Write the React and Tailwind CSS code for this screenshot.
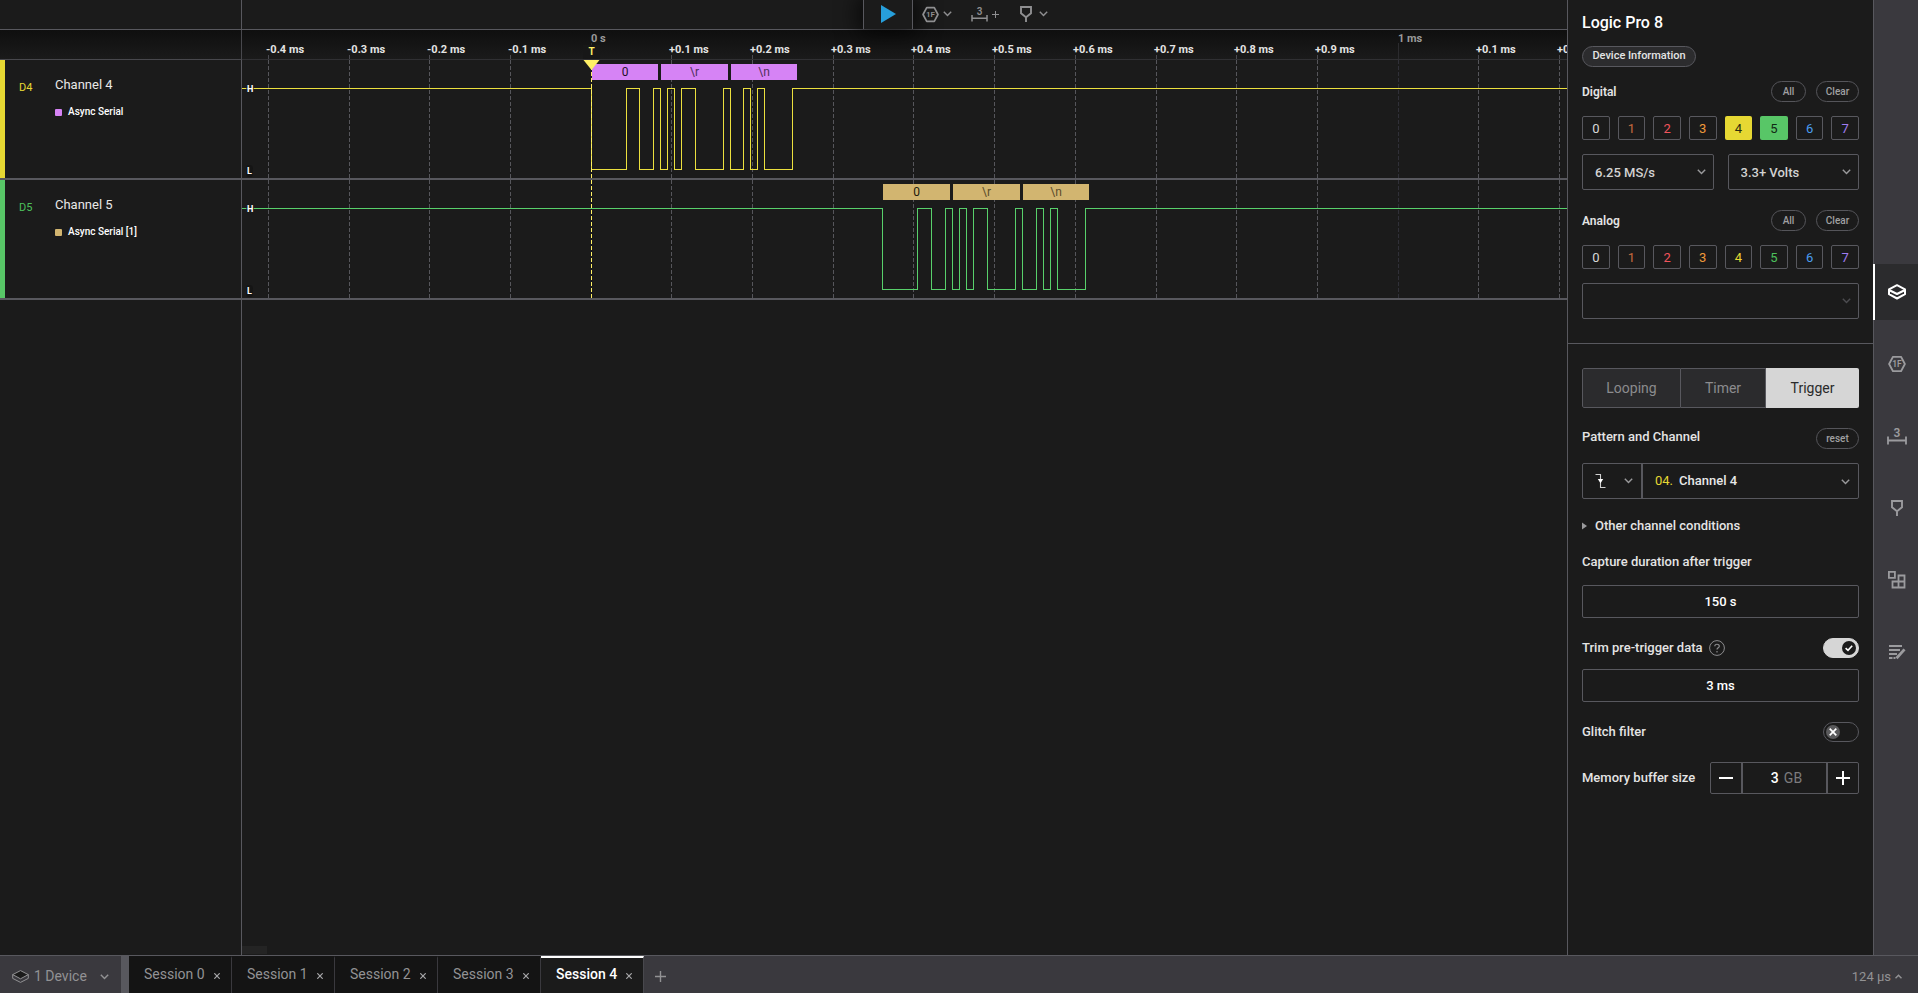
import React, { useState } from "react";

const TICKS = [
  { x: 26, label: "-0.4 ms" },
  { x: 107, label: "-0.3 ms" },
  { x: 187, label: "-0.2 ms" },
  { x: 268, label: "-0.1 ms" },
  { x: 349, label: "0 s", major: true },
  { x: 429, label: "+0.1 ms" },
  { x: 510, label: "+0.2 ms" },
  { x: 591, label: "+0.3 ms" },
  { x: 671, label: "+0.4 ms" },
  { x: 752, label: "+0.5 ms" },
  { x: 833, label: "+0.6 ms" },
  { x: 914, label: "+0.7 ms" },
  { x: 994, label: "+0.8 ms" },
  { x: 1075, label: "+0.9 ms" },
  { x: 1156, label: "1 ms", major: true },
  { x: 1236, label: "+0.1 ms" },
  { x: 1317, label: "+0.2 ms" },
];

const LANES = [
  {
    id: "D4",
    name: "Channel 4",
    analyzer: "Async Serial",
    strip: "bg-[#e6d833]",
    idColor: "text-[#e6d833]",
    swatch: "bg-[#d683f5]",
    bubble: "bg-[#d683f5]",
    stroke: "#ece03e",
    edges: [349, 384, 397, 411, 418, 425, 432, 439, 453, 481, 488, 501, 508, 515, 522, 550],
    frames: [
      { x: 350, w: 66, text: "0", tone: "text-[#1f1028]" },
      { x: 419, w: 67, text: "\\r", tone: "text-[#4f2f5c]" },
      { x: 489, w: 66, text: "\\n", tone: "text-[#4f2f5c]" },
    ],
  },
  {
    id: "D5",
    name: "Channel 5",
    analyzer: "Async Serial [1]",
    strip: "bg-[#58c667]",
    idColor: "text-[#4cc05c]",
    swatch: "bg-[#d2b570]",
    bubble: "bg-[#d2b570]",
    stroke: "#58d06b",
    edges: [640, 675, 689, 703, 710, 717, 724, 731, 745, 773, 780, 794, 801, 808, 815, 843],
    frames: [
      { x: 641, w: 67, text: "0", tone: "text-[#201a0c]" },
      { x: 711, w: 67, text: "\\r", tone: "text-[#5c4e2c]" },
      { x: 781, w: 66, text: "\\n", tone: "text-[#5c4e2c]" },
    ],
  },
];

function wavePath(edges) {
  const high = 28.5;
  const low = 109.5;
  let d = `M0 ${high}`;
  edges.forEach((e, i) => {
    d += `H${e + 0.5}V${i % 2 === 0 ? low : high}`;
  });
  return d + "H6000";
}

function Chevron({ className = "" }) {
  return (
    <svg width="9" height="6" viewBox="0 0 9 6" fill="none" stroke="currentColor" strokeWidth="1.4" className={className} aria-hidden="true">
      <path d="M0.8 0.8 4.5 4.6 8.2 0.8" />
    </svg>
  );
}

function HexIcon({ size = 18 }) {
  return (
    <svg width={size} height={size} viewBox="0 0 18 18" fill="none" stroke="currentColor" strokeWidth="1.8" className="overflow-visible" aria-hidden="true">
      <path d="M5 1.8h8L16.9 9 13 16.2H5L1.1 9z" strokeLinejoin="round" />
      <text x="9" y="12" textAnchor="middle" fontFamily="Roboto, sans-serif" fontSize="8.5" fontWeight="600" fill="currentColor" stroke="none">1F</text>
    </svg>
  );
}

function MeasureIcon({ width = 20, height = 18 }) {
  return (
    <svg width={width} height={height} viewBox="0 0 20 18" fill="none" stroke="currentColor" strokeWidth="1.8" className="overflow-visible" aria-hidden="true">
      <text x="10" y="10" textAnchor="middle" fontFamily="Roboto, sans-serif" fontSize="12" fontWeight="600" fill="currentColor" stroke="none">3</text>
      <path d="M1 9.5v8M19 9.5v8M1 13.5h18" />
    </svg>
  );
}

function MarkerIcon() {
  return (
    <svg width="14" height="18" viewBox="0 0 14 18" fill="none" stroke="currentColor" strokeWidth="1.9" aria-hidden="true">
      <path d="M2 2h10v6.2L7 12.2 2 8.2zM7 12v5" />
    </svg>
  );
}

function DeviceIcon() {
  return (
    <svg width="20" height="18" viewBox="0 0 20 18" fill="none" stroke="currentColor" strokeWidth="2" strokeLinejoin="round" aria-hidden="true">
      <path d="M10 2.2 18 6.4v4.8l-8 4.3-8-4.3V6.4z" />
      <path d="M2 7l8 4 8-4" />
    </svg>
  );
}

function BlocksIcon() {
  return (
    <svg width="20" height="20" viewBox="0 0 20 20" fill="none" stroke="currentColor" strokeWidth="1.8" aria-hidden="true">
      <path d="M1.9 1.9h6v6h-6zM11.5 5.5h6v6h-6zM5.5 11.5h6v6h-6zM11.5 11.5h6v6h-6z" />
    </svg>
  );
}

function NotesIcon() {
  return (
    <svg width="18" height="16" viewBox="0 0 18 16" fill="none" stroke="currentColor" strokeWidth="1.9" aria-hidden="true">
      <path d="M1 2h13M1 6h11M1 10h8M1 14h3.5M5.5 14h2" />
      <path d="M8.5 14.2 16.5 5.4" strokeWidth="2.8" />
    </svg>
  );
}

function Toolbar() {
  return (
    <header className="flex h-[30px] shrink-0 border-b border-[#58585e]">
      <div className="w-[242px] shrink-0 border-r border-[#58585e]" />
      <div className="flex flex-1 justify-center overflow-visible pl-[109px]">
        <div className="relative z-10 flex w-[193px] items-stretch text-[#8f8f91]">
          <button type="button" aria-label="Start capture" className="grid w-[50px] shrink-0 place-items-center border-x border-[#58585e] bg-[#1b1b1b] pb-px pl-px shadow-[0_0_22px_4px_rgba(0,0,0,0.75)]">
            <svg width="15" height="18" viewBox="0 0 15 18" aria-hidden="true">
              <path d="M0 0 15 9 0 18z" fill="#279fdb" />
            </svg>
          </button>
          <div className="flex flex-1 items-center justify-between pr-2 pb-px pl-[9px]">
            <button type="button" aria-label="Add analyzer" className="flex items-center gap-1">
              <HexIcon size={17} />
              <Chevron />
            </button>
            <button type="button" aria-label="Add measurement" className="flex items-center gap-1">
              <MeasureIcon width={17} height={15} />
              <svg width="7" height="7" viewBox="0 0 7 7" stroke="currentColor" aria-hidden="true">
                <path d="M3.5 0v7M0 3.5h7" />
              </svg>
            </button>
            <button type="button" aria-label="Add marker" className="flex items-center gap-1.5">
              <MarkerIcon />
              <Chevron />
            </button>
          </div>
        </div>
      </div>
    </header>
  );
}

function Ruler() {
  return (
    <div className="flex h-[30px] shrink-0 bg-linear-to-b from-[#0f0f0f] to-[#1b1b1b]">
      <div className="w-[242px] shrink-0 border-r border-b border-[#48484d]" />
      <div className="relative flex-1 overflow-hidden border-b border-[#303033] font-bold">
        {TICKS.map((t) => (
          <React.Fragment key={t.x}>
            <span
              className={
                t.major
                  ? "absolute top-px text-[11px] leading-4 whitespace-nowrap text-[#9a9a9a]"
                  : "absolute top-3 text-[11px] leading-4 whitespace-nowrap text-[#e4e4e4]"
              }
              style={{ left: t.major ? t.x : t.x - 2 }}
            >
              {t.label}
            </span>
            <span
              className={t.major ? "absolute bottom-0 h-4 w-px bg-[#2b2b2e]" : "absolute bottom-0 h-1 w-px bg-[#4a4a50]"}
              style={{ left: t.x }}
            />
          </React.Fragment>
        ))}
        <span className="absolute bottom-0 left-[341px] w-[17px] bg-[#171717] text-center text-[10px] leading-[14px] text-[#fff066]">T</span>
      </div>
    </div>
  );
}

function Lane({ lane, first }) {
  return (
    <section className="flex h-[120px] shrink-0 border-b-2 border-[#58585e]">
      <div className="flex w-[242px] shrink-0 border-r border-[#58585e]">
        <div className={`w-[5px] ${lane.strip}`} />
        <div className={`w-9 pt-[19px] pl-3.5 text-[11px] leading-[18px] ${lane.idColor}`}>{lane.id}</div>
        <div className="pt-4 pl-3.5">
          <h2 className="text-[13px] leading-[18px] text-[#e8e8e8]">{lane.name}</h2>
          <p className="mt-2.5 flex items-center gap-1.5 text-[10px] leading-4 font-medium text-white">
            <span className={`size-[7px] rounded-[1px] ${lane.swatch}`} />
            {lane.analyzer}
          </p>
        </div>
      </div>
      <div className="relative flex-1 overflow-hidden">
        <svg className="absolute inset-0 h-full w-full" shapeRendering="crispEdges" fill="none" aria-hidden="true">
          {TICKS.filter((t) => t.x !== 349).map((t) => (
            <path key={t.x} d={`M${t.x + 0.5} 0V118`} stroke={t.major ? "#303038" : "#56565b"} strokeDasharray="4 2" />
          ))}
          <path d={wavePath(lane.edges)} stroke={lane.stroke} />
          <path d="M349.5 0V118" stroke="#fff066" strokeDasharray="4 2" />
        </svg>
        {lane.frames.map((f) => (
          <div
            key={f.x}
            className={`absolute top-1 h-4 text-center text-[12px] leading-4 ${lane.bubble} ${f.tone}`}
            style={{ left: f.x, width: f.w }}
          >
            {f.text}
          </div>
        ))}
        {first && (
          <svg className="absolute top-0 left-[341px]" width="17" height="10" viewBox="0 0 17 10" aria-hidden="true">
            <path d="M0.5 0h16l-8 10z" fill="#fff066" />
          </svg>
        )}
        <span className="absolute top-[23px] left-1 rounded bg-[#1b1b1b]/60 px-px text-[9px] leading-3 font-bold text-white">H</span>
        <span className="absolute top-[105px] left-1 rounded bg-[#151515] px-px text-[9px] leading-3 font-bold text-white">L</span>
      </div>
    </section>
  );
}

const PORTS = [
  "text-[#d8d8d8]",
  "text-[#c56b3e]",
  "text-[#f2545b]",
  "text-[#f09a3a]",
  "text-[#e6d833]",
  "text-[#4cc05c]",
  "text-[#4a9df0]",
  "text-[#a07df2]",
];

function Pill({ children, className = "" }) {
  return (
    <button type="button" className={`h-[21px] rounded-full border border-[#55555a] text-[10px] font-medium text-[#a0a0a2] ${className}`}>
      {children}
    </button>
  );
}

function PortGroup({ title, active }) {
  return (
    <>
      <div className="flex h-[21px] items-center gap-2.5">
        <h3 className="flex-1 text-[12px] font-semibold">{title}</h3>
        <Pill className="w-[35px]">All</Pill>
        <Pill className="w-[43px]">Clear</Pill>
      </div>
      <div className="mt-3.5 grid grid-cols-8 gap-2">
        {PORTS.map((color, i) => {
          const on = active.includes(i);
          const tone = !on
            ? `border border-[#58585e] ${color}`
            : i === 4
              ? "bg-[#e6d833] text-[#2a2a10]"
              : "bg-[#58c667] text-[#102a14]";
          return (
            <button key={i} type="button" aria-pressed={on} aria-label={`${title} ${i}`} className={`h-6 rounded-xs pt-px text-[13px] ${tone}`}>
              {i}
            </button>
          );
        })}
      </div>
    </>
  );
}

function SelectBox({ label, options, disabled }) {
  return (
    <div className="relative">
      <select
        aria-label={label}
        disabled={disabled}
        className="block h-9 w-full appearance-none rounded-xs border border-[#58585e] bg-transparent pt-px pl-3 text-[13px] font-medium text-[#d2d2d2]"
      >
        {options.map((o) => (
          <option key={o}>{o}</option>
        ))}
      </select>
      <Chevron className={`pointer-events-none absolute top-[15px] right-2 ${disabled ? "text-[#4c4c50]" : "text-[#9a9a9c]"}`} />
    </div>
  );
}

function Toggle({ id, checked, onChange }) {
  return (
    <span className="relative block h-5 w-9 shrink-0">
      <input
        id={id}
        type="checkbox"
        checked={checked}
        onChange={onChange}
        className="block h-5 w-9 appearance-none rounded-full border border-[#58585e] checked:border-[#d6d6d6] checked:bg-[#d6d6d6]"
      />
      {checked ? (
        <svg className="pointer-events-none absolute top-[3px] right-[3px]" width="14" height="14" viewBox="0 0 14 14" fill="none" aria-hidden="true">
          <circle cx="7" cy="7" r="7" fill="#1b1b1b" />
          <path d="M3.6 7.2 6 9.4l4.2-4.6" stroke="#fff" strokeWidth="1.6" />
        </svg>
      ) : (
        <svg className="pointer-events-none absolute top-[3px] left-[3px]" width="14" height="14" viewBox="0 0 14 14" fill="none" aria-hidden="true">
          <circle cx="7" cy="7" r="7" fill="#5a5a5c" />
          <path d="M3.7 3.7l6.6 6.6M10.3 3.7l-6.6 6.6" stroke="#fff" strokeWidth="1.7" />
        </svg>
      )}
    </span>
  );
}

function DevicePanel() {
  const [trim, setTrim] = useState(true);
  const [glitch, setGlitch] = useState(false);
  const field = "block h-[33px] w-full rounded-xs border border-[#58585e] bg-transparent text-center text-[13px] font-medium text-white";
  return (
    <aside className="w-[307px] shrink-0 overflow-hidden border-x border-[#58585e] bg-[#1b1b1b] text-[#e4e4e4]">
      <div className="px-3.5 pt-[13px]">
        <h1 className="text-[16px] leading-5 font-medium text-white">Logic Pro 8</h1>
        <button type="button" className="mt-[13px] block h-[21px] w-[114px] rounded-full border border-[#58585e] bg-[#2c2c2e] text-[11px] font-medium text-[#e4e4e4]">
          Device Information
        </button>
        <div className="mt-3.5">
          <PortGroup title="Digital" active={[4, 5]} />
        </div>
        <div className="mt-3.5 grid grid-cols-2 gap-3.5">
          <SelectBox label="Sample rate" options={["6.25 MS/s"]} />
          <SelectBox label="Logic level" options={["3.3+ Volts"]} />
        </div>
        <div className="mt-5">
          <PortGroup title="Analog" active={[]} />
        </div>
        <div className="mt-3.5">
          <SelectBox label="Analog sample rate" options={[""]} disabled />
        </div>
      </div>
      <hr className="mt-6 border-[#58585e]" />
      <div className="px-3.5 pt-6 text-[13px] font-medium">
        <div className="flex h-10 overflow-hidden rounded-xs text-[14px] font-normal text-[#8c8c8e]">
          <button type="button" className="w-[99px] rounded-l-xs border border-[#58585e] bg-[#2b2b2d]">Looping</button>
          <button type="button" className="w-[85px] border-y border-r border-[#58585e] bg-[#2b2b2d]">Timer</button>
          <button type="button" className="flex-1 bg-[#d6d6d6] text-[#2a2a2a]">Trigger</button>
        </div>
        <div className="mt-5 flex h-[21px] items-start justify-between">
          <h3 className="leading-[18px]">Pattern and Channel</h3>
          <Pill className="w-[43px]">reset</Pill>
        </div>
        <div className="mt-3.5 flex h-9 rounded-xs border border-[#58585e]">
          <button type="button" aria-label="Falling edge" className="flex w-[60px] items-center justify-between border-r-2 border-[#58585e] pr-2 pl-3 text-[#9a9a9c]">
            <svg width="11" height="16" viewBox="0 0 11 16" fill="none" aria-hidden="true">
              <path d="M0.5 1.5h5v13h5" stroke="#cfcfcf" strokeWidth="1.1" />
              <path d="M2.8 6h5.4L5.5 10.2z" fill="#fff" />
            </svg>
            <Chevron />
          </button>
          <label className="relative flex flex-1 items-center pl-3">
            <span className="font-normal text-[#e6d833]">04.</span>
            <select aria-label="Trigger channel" className="h-full flex-1 appearance-none bg-transparent pl-1.5 text-[#e8e8e8]">
              <option>Channel 4</option>
            </select>
            <Chevron className="pointer-events-none absolute top-[15px] right-2 text-[#9a9a9c]" />
          </label>
        </div>
        <button type="button" className="mt-[18px] flex items-center gap-2 leading-[18px]">
          <svg width="5" height="8" viewBox="0 0 5 8" aria-hidden="true">
            <path d="M0 0.5 5 4 0 7.5z" fill="#9a9a9c" />
          </svg>
          Other channel conditions
        </button>
        <label htmlFor="duration" className="mt-[18px] block leading-[18px]">Capture duration after trigger</label>
        <input id="duration" defaultValue="150 s" className={`mt-3.5 ${field}`} />
        <div className="mt-5 flex h-5 items-center">
          <label htmlFor="trim" className="leading-[18px]">Trim pre-trigger data</label>
          <svg className="ml-1.5" width="16" height="16" viewBox="0 0 16 16" fill="none" stroke="#8c8c8e" aria-hidden="true">
            <circle cx="8" cy="8" r="7.4" />
            <path d="M5.8 6.3C5.8 3.6 10.3 3.6 10.3 6.2 10.3 7.8 8 7.8 8 9.6M8 11v1.4" strokeWidth="1.2" />
          </svg>
          <span className="flex-1" />
          <Toggle id="trim" checked={trim} onChange={() => setTrim(!trim)} />
        </div>
        <input aria-label="Pre-trigger data" defaultValue="3 ms" className={`mt-[11px] ${field}`} />
        <div className="mt-5 flex h-5 items-center justify-between">
          <label htmlFor="glitch" className="leading-[18px]">Glitch filter</label>
          <Toggle id="glitch" checked={glitch} onChange={() => setGlitch(!glitch)} />
        </div>
        <div className="mt-5 flex h-8 items-center justify-between">
          <label htmlFor="buffer">Memory buffer size</label>
          <div className="flex h-8 w-[149px] rounded-xs border border-[#58585e]">
            <button type="button" aria-label="Decrease" className="grid w-8 place-items-center border-r-2 border-[#58585e]">
              <svg width="14" height="14" viewBox="0 0 14 14" stroke="#fff" strokeWidth="2" aria-hidden="true">
                <path d="M0 7h14" />
              </svg>
            </button>
            <div className="flex flex-1 items-center justify-center gap-1 pl-1 text-[14px]">
              <input id="buffer" defaultValue="3" className="w-[9px] bg-transparent text-white" />
              <span className="font-normal text-[#7c7c7e]">GB</span>
            </div>
            <button type="button" aria-label="Increase" className="grid w-8 place-items-center border-l-2 border-[#58585e]">
              <svg width="14" height="14" viewBox="0 0 14 14" stroke="#fff" strokeWidth="2" aria-hidden="true">
                <path d="M0 7h14M7 0v14" />
              </svg>
            </button>
          </div>
        </div>
      </div>
    </aside>
  );
}

function IconRail() {
  const item = "grid h-14 w-full place-items-center border-l-2 border-transparent text-[#9b9b9e]";
  return (
    <nav className="flex w-11 shrink-0 flex-col gap-4 bg-[#3a393e] pt-[264px]">
      <button type="button" aria-label="Device" className="relative z-10 -ml-px grid h-14 w-[45px] place-items-center border-l-2 border-white bg-[#2b2b2d] text-white">
        <DeviceIcon />
      </button>
      <button type="button" aria-label="Analyzers" className={item}><HexIcon /></button>
      <button type="button" aria-label="Measurements" className={item}><MeasureIcon /></button>
      <button type="button" aria-label="Markers" className={item}><MarkerIcon /></button>
      <button type="button" aria-label="Extensions" className={item}><BlocksIcon /></button>
      <button type="button" aria-label="Notes" className={item}><NotesIcon /></button>
    </nav>
  );
}

function CloseMark() {
  return (
    <svg width="6" height="6" viewBox="0 0 6 6" stroke="currentColor" strokeWidth="1.2" aria-hidden="true">
      <path d="M0.3 0.3l5.4 5.4M5.7 0.3.3 5.7" />
    </svg>
  );
}

function Footer() {
  return (
    <footer className="flex h-[38px] shrink-0 border-t border-[#58585e] bg-[#3a393e] text-[14px] text-[#929294]">
      <button type="button" className="flex w-[121px] items-center pt-1 pl-3">
        <svg width="17" height="13" viewBox="0 0 17 13" fill="#1b1b1b" stroke="#929294" strokeLinejoin="round" aria-hidden="true">
          <path d="M0.7 4.6v3.8l7.8 4 7.8-4V4.6z" fill="none" />
          <path d="M8.5.6 16.3 4.6 8.5 8.8.7 4.6z" />
        </svg>
        <span className="ml-[5px] flex-1 text-left">1 Device</span>
        <Chevron className="mr-3" />
      </button>
      <div className="w-2 bg-[#58585e]" />
      {[0, 1, 2, 3, 4].map((n) => (
        <div
          key={n}
          className={
            n === 4
              ? "flex w-[103px] items-center border-t-2 border-r border-t-white border-r-[#48484d] bg-[#1b1b1b] pr-[11px] pl-[15px] font-medium text-white"
              : "flex w-[103px] items-center border-t-2 border-r border-t-[#141414] border-r-[#3a393e] bg-[#141414] pr-[11px] pl-[15px]"
          }
        >
          <button type="button" className="flex-1 pb-0.5 text-left whitespace-nowrap">Session {n}</button>
          <button type="button" aria-label={`Close session ${n}`} className="text-[#a8a8aa]"><CloseMark /></button>
        </div>
      ))}
      <button type="button" aria-label="New session" className="grid w-8 place-items-center pt-1">
        <svg width="11" height="11" viewBox="0 0 11 11" stroke="currentColor" strokeWidth="1.4" aria-hidden="true">
          <path d="M5.5 0v11M0 5.5h11" />
        </svg>
      </button>
      <span className="flex-1" />
      <button type="button" className="flex items-center gap-1 pt-1 pr-4 text-[13px]">
        124 µs
        <svg width="7" height="5" viewBox="0 0 7 5" fill="none" stroke="currentColor" strokeWidth="1.5" aria-hidden="true">
          <path d="M0.5 4.2 3.5 1.2 6.5 4.2" />
        </svg>
      </button>
    </footer>
  );
}

export default function App() {
  return (
    <div className="flex h-screen flex-col overflow-hidden bg-[#1b1b1b] font-['Roboto',sans-serif]">
      <div className="flex min-h-0 flex-1">
        <main className="flex min-w-0 flex-1 flex-col">
          <Toolbar />
          <Ruler />
          {LANES.map((lane, i) => (
            <Lane key={lane.id} lane={lane} first={i === 0} />
          ))}
          <div className="flex flex-1">
            <div className="w-[242px] shrink-0 border-r border-[#58585e]" />
            <div className="flex flex-1 items-end pb-px">
              <div className="h-2 w-[25px] bg-[#242424]" />
            </div>
          </div>
        </main>
        <DevicePanel />
        <IconRail />
      </div>
      <Footer />
    </div>
  );
}
